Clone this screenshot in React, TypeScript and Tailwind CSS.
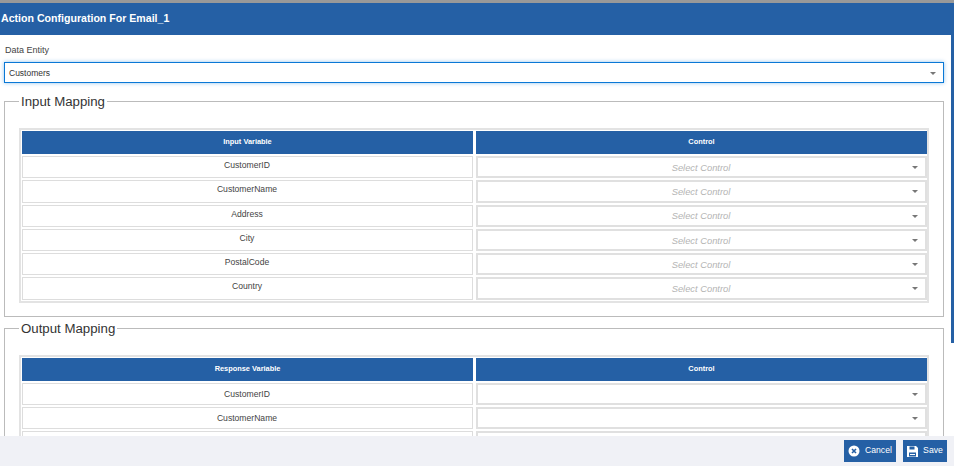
const font = "font-['Liberation_Sans',Arial,sans-serif]";

function Caret() {
  return <span className="h-0 w-0 border-x-[3px] border-t-[3px] border-x-transparent border-t-[#777777]" />;
}

function Row({ name, placeholder, nameClass }: { name: string; placeholder?: string; nameClass: string }) {
  return (
    <div className="grid grid-cols-2 gap-x-[3px] h-[22.3px]">
      <div className={"border border-[#dddddd] flex items-start justify-center pr-[1px] text-[8.6px] leading-[12px] text-[#444444] " + nameClass}>{name}</div>
      <div className="border-2 border-[#e0e0e0] relative flex items-center justify-center pt-[1px] pr-[1px] text-[9.35px] italic text-[#b4b4b4]">
        {placeholder}
        <span className="absolute right-[7px] top-[8px] flex"><Caret /></span>
      </div>
    </div>
  );
}

function Mapping({ title, head, rows, placeholder, className, nameClass }: { title: string; head: string; rows: string[]; placeholder?: string; className: string; nameClass: string }) {
  return (
    <fieldset className={"border border-[#bbbbbb] mx-[4px] px-[14px] " + className}>
      <legend className="ml-0 px-[2px] text-[13.25px] leading-[17px] text-[#333333]">{title}</legend>
      <div className="border-2 border-[#e3e3e3] mt-[18px] pl-[1px] pt-[1px] flex flex-col gap-[2px] pb-[1px]">
        <div className="grid grid-cols-2 gap-x-[3px] h-[23px]">
          <div className="bg-[#2560a5] flex items-center justify-center pb-[1px] text-[7.4px] font-bold text-white">{head}</div>
          <div className="bg-[#2560a5] flex items-center justify-center pb-[1px] text-[7.4px] font-bold text-white">Control</div>
        </div>
        {rows.map((r, i) => (
          <Row key={i} name={r} placeholder={placeholder} nameClass={nameClass} />
        ))}
      </div>
    </fieldset>
  );
}

export default function App() {
  const rows = ["CustomerID", "CustomerName", "Address", "City", "PostalCode", "Country"];
  return (
    <div className={"h-[466px] w-[954px] flex flex-col overflow-hidden relative bg-white " + font}>
      <div className="h-[3px] bg-[#999999] shrink-0" />
      <div className="h-[32px] bg-[#2560a5] shrink-0 flex items-center pl-[1px] text-[10.6px] font-bold text-white">
        Action Configuration For Email_1
      </div>
      <div className="flex-1 min-h-0 overflow-hidden pr-[6px]">
        <div className="pl-[5px] pt-[9px] text-[9px] leading-[12px] text-[#444444]">Data Entity</div>
        <div className="mx-[4px] mt-[6px] h-[21px] border border-[#0a78d6] shadow-[0_0_4px_rgba(10,120,214,0.45)] flex items-center justify-between pl-[4px] pr-[7px] pt-[1px] text-[8.5px] text-[#333333]">
          Customers
          <Caret />
        </div>
        <Mapping className="mt-[10px] pb-[13px]" nameClass="pt-[2px]" title="Input Mapping" head="Input Variable" rows={rows} placeholder="Select Control" />
        <Mapping className="mt-[3px]" nameClass="pt-[4px]" title="Output Mapping" head="Response Variable" rows={["CustomerID", "CustomerName", ""]} />
      </div>
      <div className="h-[30px] bg-[#f0f1f6] shrink-0 flex items-start justify-end gap-[7px] pt-[4px] pr-[7px]">
        <button className="h-[22px] w-[52px] bg-[#2560a5] text-white text-[8.6px] pb-[1px] flex items-center justify-center gap-[5px]">
          <svg width="12" height="12" viewBox="0 0 12 12" className="mt-[1px]">
            <circle cx="6" cy="6" r="5.5" fill="#ffffff" />
            <path d="M4 4l4 4M8 4l-4 4" stroke="#2560a5" strokeWidth="1.6" />
          </svg>
          Cancel
        </button>
        <button className="h-[22px] w-[44px] bg-[#2560a5] text-white text-[8.7px] pb-[1px] flex items-center justify-center gap-[5px]">
          <svg width="11" height="11" viewBox="0 0 11 11" className="mt-[1px]">
            <path d="M0 0h9l2 2v9H0z" fill="#ffffff" />
            <path d="M2.5 0.5h5v3h-5zM2 6.5h7v4H2z" fill="#2560a5" />
            <path d="M3 8h5v1H3z" fill="#ffffff" />
          </svg>
          Save
        </button>
      </div>
      <div className="absolute right-0 top-[35px] w-[3px] h-[308px] bg-[#2560a5]" />
    </div>
  );
}
